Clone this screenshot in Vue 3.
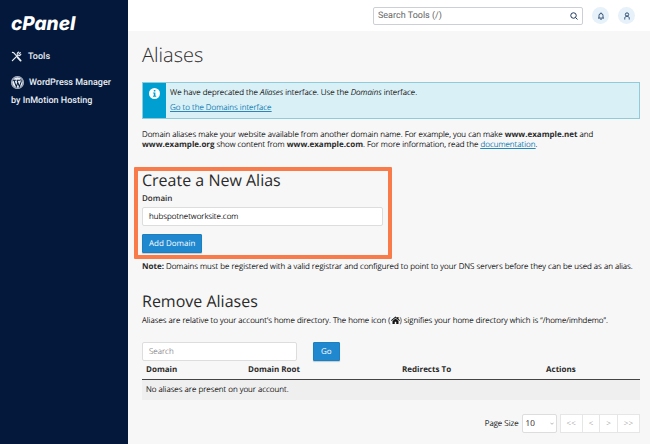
<script setup>
import { ref } from 'vue'

const domain = ref('hubspotnetworksite.com')
const filter = ref('')
const toolQuery = ref('')
const pageSize = ref('10')
const columns = ['Domain', 'Domain Root', 'Redirects To', 'Actions']
const pages = [
  { text: '<<', label: 'First page' },
  { text: '<', label: 'Previous page' },
  { text: '>', label: 'Next page' },
  { text: '>>', label: 'Last page' },
]
</script>

<template>
  <div class="shell">
    <aside class="sidebar">
      <a class="logo" href="#">cPanel</a>
      <nav class="nav">
        <a class="nav-item" href="#">
          <svg class="nav-icon tools" viewBox="0 0 24 24" fill="none" stroke="currentColor" stroke-width="2.4" stroke-linecap="round">
            <path d="M3 3l3 1 8 9" />
            <path d="M14.500 14l6.500 7" stroke-width="4" />
            <path d="M3 21l11-11" stroke-width="2.800" />
            <path d="M20.500 3.500l-3.500 3.500 M17 2.500a4.500 4.500 0 0 0-3 6.500c1.500 2 5.500 2 7.500-2" />
          </svg>
          <span>Tools</span>
        </a>
        <a class="nav-item" href="#">
          <svg class="nav-icon wp" viewBox="0 0 24 24">
            <circle cx="12" cy="12" r="12" fill="#e9eef5" />
            <circle cx="12" cy="12" r="10.300" fill="none" stroke="#03183a" stroke-width="1" />
            <path d="M3.500 8h5.500M10.500 8h6M5.500 8l4.300 11.500L12.600 12M11 8l4.500 11.500 3.300-9c.6-2-.8-3-1-4.500" fill="none" stroke="#03183a" stroke-width="1.900" />
          </svg>
          <span>WordPress Manager by InMotion Hosting</span>
        </a>
      </nav>
    </aside>

    <div class="page">
      <header class="topbar">
        <form class="tool-search" @submit.prevent>
          <input v-model="toolQuery" type="text" placeholder="Search Tools (/)" aria-label="Search Tools" />
          <button type="submit" aria-label="Search">
            <svg viewBox="0 0 16 16" fill="none" stroke="currentColor" stroke-width="2">
              <circle cx="7" cy="7" r="5.500" />
              <path d="M11 11l4 4" />
            </svg>
          </button>
        </form>
        <button class="round" type="button" aria-label="Notifications">
          <svg viewBox="0 0 16 16" fill="none" stroke="currentColor" stroke-width="1.800">
            <path d="M4 12V7a4 4 0 0 1 8 0v5M2 12.200h12M8 3V1M6.500 14.500h3" />
          </svg>
        </button>
        <button class="round" type="button" aria-label="Account">
          <svg viewBox="0 0 16 16" fill="none" stroke="currentColor" stroke-width="1.900">
            <circle cx="8" cy="5" r="3.300" />
            <path d="M3.500 15v-2.500C3.500 10 5.500 8.500 8 8.500s4.500 1.500 4.500 4V15" />
          </svg>
        </button>
      </header>

      <main class="content">
        <h1>Aliases</h1>

        <div class="notice" role="note">
          <div class="notice-mark">
            <svg viewBox="0 0 16 16">
              <circle cx="8" cy="8" r="8" fill="#fff" />
              <path d="M7 3h2.300v2.200H7zM6 6.500h3.300v4.700h1.200v1.500H5.700v-1.500H7V8H6z" fill="#009fd2" />
            </svg>
          </div>
          <div class="notice-body">
            <p>We have deprecated the <em>Aliases</em> interface. Use the <em>Domains</em> interface.</p>
            <p><a href="#">Go to the Domains interface</a></p>
          </div>
        </div>

        <p class="intro">
          Domain aliases make your website available from another domain name. For example, you can make
          <strong>www.example.net</strong> and <strong>www.example.org</strong> show content from
          <strong>www.example.com</strong>. For more information, read the <a href="#">documentation</a>.
        </p>

        <form class="create" @submit.prevent>
          <h2>Create a New Alias</h2>
          <label for="domain">Domain</label>
          <input id="domain" v-model="domain" class="field" type="text" />
          <button class="primary" type="submit">Add Domain</button>
          <span class="highlight" aria-hidden="true"></span>
        </form>

        <p class="note">
          <strong>Note:</strong> Domains must be registered with a valid registrar and configured to point to your DNS
          servers before they can be used as an alias.
        </p>

        <section>
          <h2>Remove Aliases</h2>
          <p>
            Aliases are relative to your account’s home directory. The home icon (<svg class="home" viewBox="0 0 18 16"><path d="M9 1L0 8.500l1.300 1.400L9 3.500l7.700 6.400L18 8.500l-3-2.500V2h-2.500v2zM9 5l-6 5v6h4.500v-4.500h3V16H15v-6z" fill="currentColor" /></svg>) signifies your home directory which is “/home/imhdemo”.
          </p>

          <form class="filter" @submit.prevent>
            <input v-model="filter" class="field" type="text" placeholder="Search" aria-label="Search aliases" />
            <button class="primary" type="submit">Go</button>
          </form>

          <table>
            <thead>
              <tr>
                <th v-for="c in columns" :key="c" scope="col">{{ c }}</th>
              </tr>
            </thead>
            <tbody>
              <tr>
                <td colspan="4">No aliases are present on your account.</td>
              </tr>
            </tbody>
          </table>

          <div class="pager">
            <label for="page-size">Page Size</label>
            <div class="select">
              <select id="page-size" v-model="pageSize">
                <option>10</option>
                <option>20</option>
                <option>50</option>
              </select>
              <svg viewBox="0 0 10 6" fill="none" stroke="#888" stroke-width="1.500"><path d="M1 1l4 4 4-4" /></svg>
            </div>
            <div class="pages">
              <button v-for="p in pages" :key="p.label" type="button" :aria-label="p.label" disabled>{{ p.text }}</button>
            </div>
          </div>
        </section>
      </main>
    </div>
  </div>
</template>

<style>
body {
  margin: 0;
  background: #f7f7f7;
}
</style>

<style scoped>
* {
  box-sizing: border-box;
}
.shell {
  display: flex;
  min-height: 100vh;
  font: 300 8px/10px 'Open Sans', 'Noto Sans', sans-serif;
  color: #2b2b2b;
  text-rendering: geometricPrecision;
}
button,
input,
select {
  font: inherit;
  color: inherit;
  margin: 0;
  text-rendering: inherit;
}
h1,
h2,
p {
  margin: 0;
}
a {
  color: #2a86b8;
}
/* Deepens the light face at body size */
p,
td,
.field,
.pager {
  color: #2b2b2b;
  text-shadow: 0 0 0 currentColor;
}
strong {
  font-weight: 700;
  text-shadow: none;
}

.sidebar {
  flex: 0 0 128px;
  padding: 12px 8px 0 11px;
  background: #03183a;
  font-family: Roboto, sans-serif;
}
.logo {
  display: block;
  color: #fff;
  font: italic 800 19px/24px Inter, sans-serif;
  text-decoration: none;
}
.nav {
  display: flex;
  flex-direction: column;
  gap: 8px;
  margin-top: 12px;
}
.nav-item {
  display: block;
  color: #e9eef5;
  font-size: 9px;
  font-weight: 500;
  line-height: 18px;
  text-decoration: none;
}
.nav-icon {
  vertical-align: middle;
}
.tools {
  width: 11px;
  height: 11px;
  margin-right: 6px;
}
.wp {
  width: 13px;
  height: 13px;
  margin-right: 5px;
}

.page {
  flex: 1;
  min-width: 0;
  background: #f7f7f7;
}
.topbar {
  display: flex;
  align-items: center;
  justify-content: flex-end;
  gap: 9px;
  height: 31px;
  padding-right: 15px;
  background: #fff;
}
.tool-search {
  display: flex;
  align-items: center;
  width: 210px;
  height: 18px;
  border: 1px solid #ccd0d4;
  border-radius: 2px;
}
.tool-search input {
  flex: 1;
  min-width: 0;
  padding: 0 4px;
  border: 0;
  background: none;
  font: 9px/16px Roboto, sans-serif;
}
.tool-search input::placeholder {
  color: #666;
}
.tool-search button {
  display: flex;
  padding: 0 4px;
  border: 0;
  background: none;
  color: #1f3a5c;
}
.tool-search svg {
  width: 8px;
  height: 8px;
}
.round {
  display: flex;
  align-items: center;
  justify-content: center;
  width: 17px;
  height: 17px;
  padding: 0;
  border: 0;
  border-radius: 50%;
  background: #e7f1fa;
  color: #27466c;
}
.round svg {
  width: 8px;
  height: 8px;
}

.content {
  padding: 12px 10px 12px 14px;
}
h1 {
  font-size: 20px;
  font-weight: 300;
  line-height: 24px;
}
h2 {
  font-size: 16px;
  font-weight: 400;
  line-height: 20px;
}
.notice {
  display: flex;
  margin-top: 15px;
  border: 1px solid #8fcbd8;
  background: #d9f0f6;
}
.notice-mark {
  flex: 0 0 22px;
  padding: 5px 6px;
  background: #009fd2;
}
.notice-mark svg {
  display: block;
  width: 11px;
  height: 11px;
}
.notice-body {
  display: grid;
  gap: 5px;
  padding: 5px 4px;
}
.intro {
  max-width: 470px;
  margin-top: 11px;
}
.create {
  position: relative;
  display: flex;
  flex-direction: column;
  align-items: flex-start;
  width: 241px;
  margin-top: 20px;
}
.create label {
  margin: 4px 0 3px;
  font-weight: 600;
}
.field {
  width: 100%;
  height: 19px;
  padding: 0 6px;
  border: 1px solid #ddd;
  border-radius: 2px;
  background: #fff;
}
.field::placeholder {
  color: #999;
}
.primary {
  height: 19px;
  padding: 0 6px;
  border: 1px solid #1b7fc0;
  border-radius: 1px;
  background: #2088cf;
  box-shadow: 0 1px 1px #c4c9cd;
  color: #fff;
  font-weight: 400;
}
.create .primary {
  margin-top: 8px;
}
.highlight {
  position: absolute;
  inset: -3px -9px -6px -8px;
  border: 4px solid #f97b4a;
  border-radius: 1px;
  pointer-events: none;
}
.note {
  margin: 9px 0 19px;
}
section p {
  margin-top: 5px;
}
.home {
  width: 9px;
  height: 8px;
  vertical-align: -1px;
  color: #111;
}
.filter {
  display: flex;
  gap: 16px;
  margin-top: 16px;
}
.filter .field {
  width: 155px;
}
.filter .primary {
  padding: 0 7px;
}
table {
  width: 100%;
  table-layout: fixed;
  border-collapse: collapse;
}
th {
  padding: 4px;
  border-bottom: 1px solid #444;
  text-align: left;
  font-weight: 700;
}
th:first-child {
  width: 102px;
}
th:nth-child(2) {
  width: 154px;
}
th:nth-child(3) {
  width: 144px;
}
td {
  padding: 5px 4px;
  background: #efefef;
}
.pager {
  display: flex;
  align-items: center;
  justify-content: flex-end;
  gap: 3px;
  margin-top: 14px;
}
.select {
  position: relative;
}
.select select {
  width: 35px;
  height: 19px;
  padding: 0 3px;
  appearance: none;
  border: 1px solid #ddd;
  border-radius: 2px;
  background: #fff;
  text-shadow: inherit;
}
.select svg {
  position: absolute;
  right: 3px;
  top: 8px;
  width: 4px;
  height: 3px;
}
.pages {
  display: flex;
}
.pages button {
  height: 19px;
  padding: 0 6px;
  border: 1px solid #e6e6e6;
  background: #fff;
  color: #888;
}
.pages button + button {
  border-left: 0;
}
</style>
